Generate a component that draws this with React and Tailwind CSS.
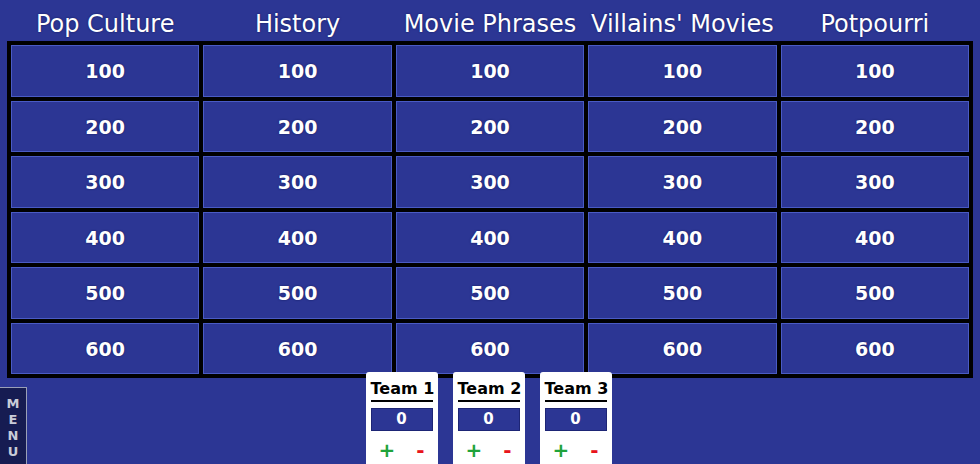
const categories = ["Pop Culture", "History", "Movie Phrases", "Villains' Movies", "Potpourri"];
const values = [100, 200, 300, 400, 500, 600];
const teams = ["Team 1", "Team 2", "Team 3"];

function TeamCard({ name }) {
  return (
    <div className="w-[72px] h-[100px] bg-white rounded-t-[3px] px-[5px] pt-[8px] flex flex-col items-stretch">
      <div className="text-[16px] leading-[18px] font-bold text-black text-center pb-[2px] border-b-2 border-black whitespace-nowrap">
        {name}
      </div>
      <div className="mt-[6px] h-[23px] bg-[#2c3694] border border-[#1d2575] flex items-center justify-center text-white font-bold text-[15px]">
        0
      </div>
      <div className="flex justify-between px-[8px] mt-[9px] text-[20px] font-bold leading-none">
        <button className="text-[#1fa33a]">+</button>
        <button className="text-[#e8141c]">-</button>
      </div>
    </div>
  );
}

export default function App() {
  return (
    <div
      className="w-[980px] h-[464px] overflow-hidden bg-[#2c3694] relative"
      style={{ fontFamily: '"DejaVu Sans", Verdana, sans-serif' }}
    >
      <div className="grid grid-cols-5 gap-[4px] px-[11px] h-[41px] items-center pt-[6px]">
        {categories.map((c) => (
          <div
            key={c}
            className="text-center text-white text-[24px] leading-none whitespace-nowrap [text-shadow:0_0_2px_#10185a]"
          >
            {c}
          </div>
        ))}
      </div>

      <div className="ml-[7px] w-[966px] bg-black p-[4px] grid grid-cols-5 grid-rows-6 gap-[4px] h-[337px]">
        {values.map((v) =>
          categories.map((c) => (
            <div
              key={c + v}
              className="bg-[#2c3694] border border-[#4a5bc4] flex items-center justify-center pt-[1px] text-white font-bold text-[19px] [text-shadow:0_0_2px_#10185a]"
            >
              {v}
            </div>
          ))
        )}
      </div>

      <div className="relative flex justify-center gap-[15px] -mt-[6px] pr-[3px]">
        {teams.map((t) => (
          <TeamCard key={t} name={t} />
        ))}
      </div>

      <div className="absolute left-0 top-[387px] w-[27px] h-[80px] bg-[#161c52] border border-[#9aa0b8] border-l-0 flex flex-col items-center pt-[8px] text-[#c9ccd8] font-bold text-[13px] leading-[16px]">
        {"MENU".split("").map((ch, i) => (
          <span key={i}>{ch}</span>
        ))}
      </div>
    </div>
  );
}
